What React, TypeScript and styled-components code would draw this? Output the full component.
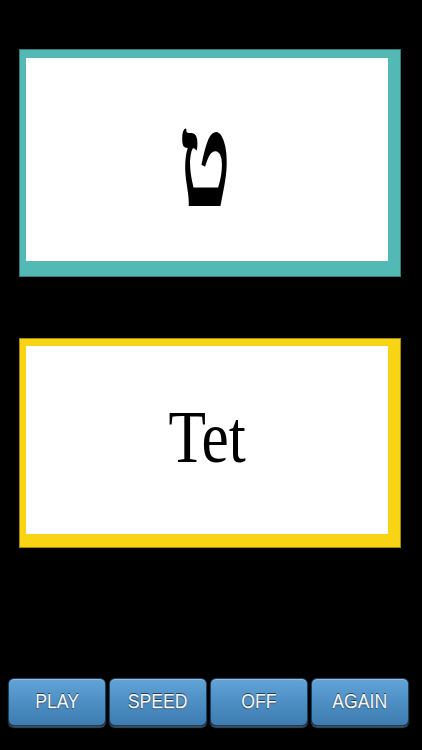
import React from "react";
import styled, { createGlobalStyle } from "styled-components";

const Global = createGlobalStyle`
  html, body { margin: 0; padding: 0; background: #000; }
  #root { width: 422px; height: 750px; }
`;

const Screen = styled.div`
  width: 422px;
  height: 750px;
  background: #000;
  display: flex;
  flex-direction: column;
  align-items: flex-start;
  box-sizing: border-box;
  padding: 49px 0 0 19px;
`;

const Card = styled.div<{ $color: string; $h: number; $top: number; $bottom: number }>`
  width: 382px;
  height: ${(p) => p.$h}px;
  box-sizing: border-box;
  background: #fff;
  border-style: solid;
  border-color: ${(p) => p.$color};
  border-width: ${(p) => `${p.$top}px 13px ${p.$bottom}px 7px`};
  outline: 1px solid rgba(0, 0, 0, 0.35);
  outline-offset: -1px;
  display: flex;
  align-items: center;
  justify-content: center;
  overflow: hidden;
`;

const Letter = styled.span`
  font-family: "Liberation Serif", "DejaVu Serif", serif;
  font-size: 112px;
  font-weight: bold;
  line-height: 1;
  color: #000;
  display: inline-block;
  transform: translate(-2px, 1px) scale(0.78, 1.18);
`;

const Word = styled.span`
  font-family: "Liberation Serif", "Times New Roman", serif;
  font-size: 73px;
  line-height: 1;
  color: #000;
  display: inline-block;
  transform: translate(0px, -3px) scaleX(0.84);
`;

const Gap = styled.div<{ $h: number }>`
  height: ${(p) => p.$h}px;
  flex: none;
`;

const Toolbar = styled.div`
  display: flex;
  gap: 3px;
  margin-left: -11px;
`;

const Button = styled.button`
  width: 98px;
  height: 48px;
  box-sizing: border-box;
  border: 1px solid #1d3f5e;
  border-radius: 6px;
  background: linear-gradient(to bottom, #62a4d6 0%, #4d8fc4 50%, #3e7cb0 100%);
  box-shadow: inset 0 1px 0 rgba(255, 255, 255, 0.3), 0 2px 1px #3b4a58;
  display: flex;
  align-items: center;
  justify-content: center;
  padding: 0;
  cursor: pointer;
`;

const Label = styled.span`
  font-family: "Liberation Sans", Arial, sans-serif;
  font-size: 21px;
  color: #f6f8fa;
  text-shadow: 0 -1px 0 #1f3f5c, 1px 1px 0 #5f7f9c, 0 1px 1px #173550;
  display: inline-block;
  transform: translateY(-1px) scaleX(0.84);
`;

export default function App() {
  return (
    <>
      <Global />
      <Screen>
        <Card $color="#53b9b4" $h={228} $top={9} $bottom={16}>
          <Letter>ט</Letter>
        </Card>
        <Gap $h={61} />
        <Card $color="#f8d414" $h={210} $top={8} $bottom={14}>
          <Word>Tet</Word>
        </Card>
        <Gap $h={130} />
        <Toolbar>
          <Button><Label>PLAY</Label></Button>
          <Button><Label>SPEED</Label></Button>
          <Button><Label>OFF</Label></Button>
          <Button><Label>AGAIN</Label></Button>
        </Toolbar>
      </Screen>
    </>
  );
}
